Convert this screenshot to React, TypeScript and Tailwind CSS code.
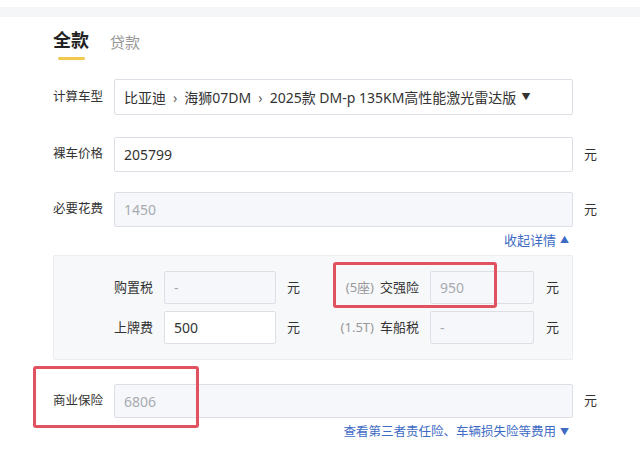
import React from 'react';

const font = { fontFamily: '"Noto Sans", "Noto Sans CJK SC", sans-serif' };

const Field = ({ value, disabled, className = '' }: { value: string; disabled?: boolean; className?: string }) => (
  <div
    className={`flex shrink-0 items-center rounded-[2px] border border-[#dcdfe6] px-[9px] text-[14px] ${
      disabled ? 'bg-[#f5f7fa] text-[#a8abb2]' : 'bg-white text-[#333]'
    } ${className}`}
  >
    {value}
  </div>
);

const Yuan = ({ ml = 'ml-[11px]' }: { ml?: string }) => (
  <span className={`${ml} shrink-0 whitespace-nowrap text-[13px] text-[#333]`}>元</span>
);

const Row = ({ label, value, disabled, h = 'h-[35px]' }: { label: string; value: string; disabled?: boolean; h?: string }) => (
  <div className="flex items-center">
    <span className="w-[50px] shrink-0 whitespace-nowrap text-[12.5px] text-[#333]">{label}</span>
    <Field value={value} disabled={disabled} className={`ml-[11px] w-[459px] ${h}`} />
    <Yuan />
  </div>
);

const SubLabel = ({ label, hint, w }: { label: string; hint?: string; w: string }) => (
  <span className={`${w} flex shrink-0 items-center justify-end whitespace-nowrap text-[13px] text-[#333]`}>
    {hint && <span className="mr-[6px] text-[#999]">{hint}</span>}
    {label}
  </span>
);

export default function App() {
  return (
    <div className="relative h-[471px] w-[640px] overflow-hidden bg-white" style={font}>
      {/* previous section edge */}
      <div className="mt-[7px] h-[10px] bg-[#f5f6f8]" />

      <div className="pl-[53px]">
        {/* Tabs */}
        <div className="mt-[11px] flex items-end gap-[21px]">
          <div className="flex flex-col items-center">
            <span className="text-[18px] font-bold leading-[24px] text-[#222]">全款</span>
            <span className="mt-[5px] h-[3px] w-[27px] rounded-full bg-[#f2c94c]" />
          </div>
          <span className="mb-[8px] text-[15px] leading-[20px] text-[#999]">贷款</span>
        </div>

        {/* Car model */}
        <div className="mt-[19px] flex items-center">
          <span className="w-[50px] shrink-0 whitespace-nowrap text-[12.5px] text-[#333]">计算车型</span>
          <div className="ml-[11px] flex h-[36px] w-[459px] shrink-0 items-center whitespace-nowrap rounded-[2px] border border-[#dcdfe6] bg-white px-[9px] text-[14px] text-[#333]">
            比亚迪<span className="mx-[7px] text-[#666]">›</span>海狮07DM<span className="mx-[7px] text-[#666]">›</span>2025款 DM-p 135KM高性能激光雷达版
            <span className="ml-[5px] text-[9px]">▼</span>
          </div>
        </div>

        <div className="mt-[22px]">
          <Row label="裸车价格" value="205799" />
        </div>
        <div className="mt-[20px]">
          <Row label="必要花费" value="1450" disabled />
        </div>

        <div className="flex w-[516px] justify-end pt-[4px] text-[13px] leading-[18px] text-[#3d6bc4]">
          收起详情<span className="ml-[4px] text-[9px] leading-[18px]">▲</span>
        </div>

        {/* Details */}
        <div className="mt-[6px] w-[520px] rounded-[2px] border border-[#ebedf0] bg-[#f7f8fa] pb-[15px] pt-[15px]">
          <div className="flex flex-col gap-[7px]">
            <div className="flex items-center">
              <SubLabel w="w-[99px]" label="购置税" />
              <Field value="-" disabled className="ml-[11px] h-[33px] w-[112px]" />
              <Yuan />
              <SubLabel w="w-[119px]" label="交强险" hint="(5座)" />
              <Field value="950" disabled className="ml-[11px] h-[33px] w-[104px]" />
              <Yuan ml="ml-[12px]" />
            </div>
            <div className="flex items-center">
              <SubLabel w="w-[99px]" label="上牌费" />
              <Field value="500" className="ml-[11px] h-[33px] w-[112px]" />
              <Yuan />
              <SubLabel w="w-[119px]" label="车船税" hint="(1.5T)" />
              <Field value="-" disabled className="ml-[11px] h-[33px] w-[104px]" />
              <Yuan ml="ml-[12px]" />
            </div>
          </div>
        </div>

        <div className="mt-[24px]">
          <Row label="商业保险" value="6806" disabled h="h-[34px]" />
        </div>

        <div className="flex w-[516px] justify-end pt-[5px] text-[12.5px] leading-[18px] text-[#3d6bc4]">
          查看第三者责任险、车辆损失险等费用<span className="ml-[4px] text-[9px] leading-[18px]">▼</span>
        </div>
      </div>

      {/* highlight annotations */}
      <div className="absolute left-[333px] top-[262px] h-[46px] w-[164px] rounded-[3px] border-[3px] border-[#e0525f]" />
      <div className="absolute left-[33px] top-[366px] h-[62px] w-[166px] rounded-[3px] border-[3px] border-[#e0525f]" />
    </div>
  );
}
